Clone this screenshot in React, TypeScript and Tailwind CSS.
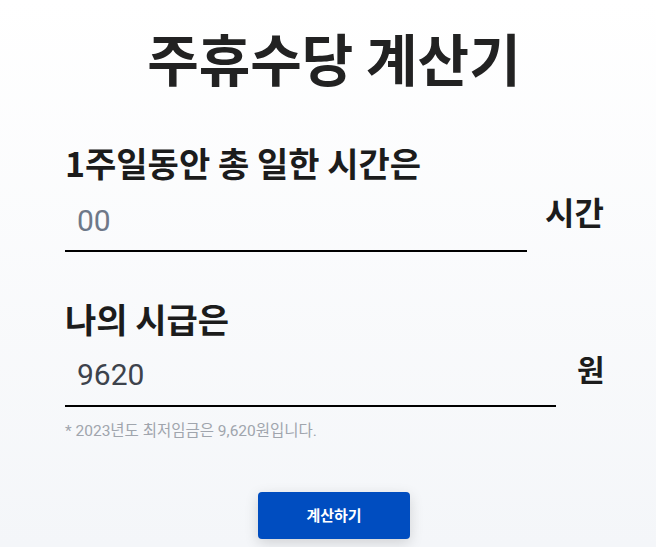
import React from "react";

const KR = "font-['Noto_Sans_CJK_KR','Noto_Sans',sans-serif]";

const Field = ({
  label,
  unit,
  placeholder,
  defaultValue,
  labelClass,
  inputClass,
  unitClass,
}: {
  label: string;
  unit: string;
  placeholder?: string;
  defaultValue?: string;
  labelClass: string;
  inputClass: string;
  unitClass: string;
}) => {
  return (
    <div className="flex flex-col">
      <label className={`text-[34px] leading-[30px] font-bold whitespace-nowrap text-[#1c1c1c] ${labelClass}`}>
        {label}
      </label>
      <div className="flex items-start">
        <input
          type="text"
          placeholder={placeholder}
          defaultValue={defaultValue}
          className={`min-w-0 shrink-0 border-b-2 border-black bg-transparent px-3 font-['Roboto','Noto_Sans_CJK_KR',sans-serif] text-[30px] text-[#3d434c] outline-none placeholder:text-[#6e7889] ${inputClass}`}
        />
        <span className={`shrink-0 leading-[30px] font-bold whitespace-nowrap text-[#1c1c1c] ${unitClass}`}>
          {unit}
        </span>
      </div>
    </div>
  );
};

export default function App() {
  return (
    <div className={`min-h-[547px] w-full bg-gradient-to-b from-[#ffffff] to-[#f4f6f9] ${KR}`}>
      <div className="flex flex-col pl-[65px] pr-[53px] pt-[30px]">
        <h1 className="text-center text-[56px] leading-[54px] font-bold whitespace-nowrap text-[#222222]">
          주휴수당 계산기
        </h1>

        <Field
          label="1주일동안 총 일한 시간은"
          unit="시간"
          placeholder="00"
          labelClass="mt-[64px]"
          inputClass="h-[74px] pt-3 w-[462px]"
          unitClass="text-[32px] mt-[18px] ml-[18px]"
        />

        <Field
          label="나의 시급은"
          unit="원"
          defaultValue="9620"
          labelClass="mt-[52px]"
          inputClass="h-[73px] pt-[10px] w-[491px]"
          unitClass="text-[30px] mt-[19px] ml-[21px]"
        />

        <p className="mt-[17px] font-['Roboto','Noto_Sans_CJK_KR',sans-serif] text-[15.5px] leading-[15px] text-[#a0a5ad]">
          * 2023년도 최저임금은 9,620원입니다.
        </p>

        <div className="mt-[53px] flex justify-center">
          <button
            type="button"
            className="h-[47px] w-[152px] rounded-[4px] bg-[#004dc0] text-[15px] font-bold text-white shadow-[0_4px_14px_rgba(0,0,0,0.15)]"
          >
            계산하기
          </button>
        </div>
      </div>
    </div>
  );
}
